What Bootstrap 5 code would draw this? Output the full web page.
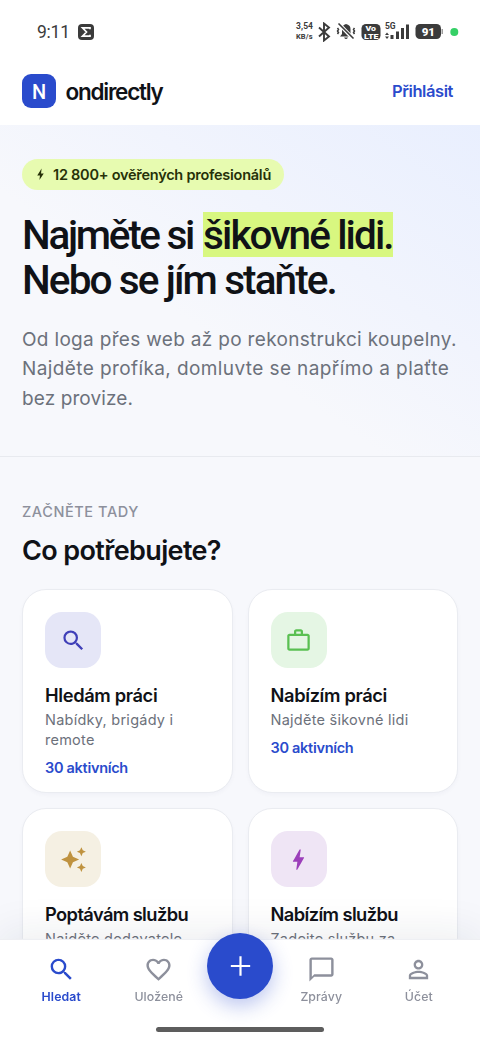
<!DOCTYPE html>
<html lang="cs">
<head>
<meta charset="utf-8">
<meta name="viewport" content="width=device-width, initial-scale=1">
<title>ondirectly</title>
<link href="https://cdn.jsdelivr.net/npm/bootstrap@5.3.0/dist/css/bootstrap.min.css" rel="stylesheet">
<style>
:root{--blue:#2a4bcc;--ink:#101217;--muted-ink:#6c717b}
html,body{height:100%;overflow:hidden}
body{font-family:Inter,"Liberation Sans",sans-serif;background:#f7f8fc;color:var(--ink);white-space:nowrap}
svg{display:block;flex:none}
.screen{width:480px;height:1040px;overflow:hidden}
.status{height:57px;padding:7px 21px 0 37px;font-family:Roboto,sans-serif;color:#3b3b3b}
.clock{font-size:17.500px;letter-spacing:-.25px}
.topbar{height:68px;padding:0 27px 0 22px}
.logo-tile{width:34px;height:34px;border-radius:9px;background:var(--blue);font:500 20px/1 Roboto,sans-serif;padding-top:2px}
.brand-name{font-size:22.500px;font-weight:600;line-height:1;letter-spacing:-1.250px;margin:2px 0 0 9.500px}
.login{font-size:16.500px;font-weight:600;color:var(--blue);letter-spacing:-.42px}
.hero{height:332px;padding:34px 22px 0;border-bottom:1px solid #e8eaef;background:linear-gradient(to bottom left,#e9effe 0%,#f1f4fd 35%,#f7f8fc 60%)}
.pill{height:31px;width:262px;border-radius:16px;background:#e7fbb0;color:#263108;font-size:14.500px;font-weight:600;padding-left:12px;letter-spacing:-.25px;gap:6px}
.headline{font:500 40.500px/45px Roboto,sans-serif;margin:23px 0 0;letter-spacing:-1.900px}
.headline .lead-in{letter-spacing:-2.310px}
.hl{background:#d8f780;display:inline-block;height:44px;box-shadow:0 -1px 0 #d8f780}
.word-gap{display:inline-block;width:10px}
.lede{font-size:19px;line-height:29.300px;color:var(--muted-ink);margin-top:22px;letter-spacing:.32px}
.lede .wide{letter-spacing:.4px}
.lede .snug{letter-spacing:.1px}
.kicker{font-size:14.500px;line-height:20px;font-weight:500;color:#8d909c;letter-spacing:.58px}
.section-title{font-size:27px;line-height:34px;font-weight:600;margin:12px 0 0;letter-spacing:-.63px}
.tiles{display:grid;grid-template-columns:210.500px 210.500px;gap:15px;grid-auto-rows:204.300px;margin-top:21px}
.tile{border:1px solid #eaecf1;border-radius:24px;background:#fff;padding:22px;box-shadow:0 2px 4px rgba(30,40,80,.03)}
.tile-icon{width:56px;height:56px;border-radius:17px;margin-bottom:15px}
.tile-title{font-size:18.300px;line-height:24px;font-weight:600;letter-spacing:-.36px}
.tile-title.tight{letter-spacing:-.6px}
.tile-text{font-size:14.500px;line-height:20px;color:var(--muted-ink);margin-top:3px;letter-spacing:.25px}
.tile-count{font-size:14.500px;line-height:20px;font-weight:600;color:var(--blue);margin-top:8px;letter-spacing:-.29px}
.dock{height:100px;background:#fff;padding:0 12.500px;box-shadow:0 -1px 1px #eeeff3,0 -8px 40px rgba(25,35,70,.08)}
.dock-item{width:97.500px;padding-top:14.500px;gap:5px;font-size:12.300px;font-weight:500;color:#8d909c;line-height:16px;letter-spacing:.1px}
.dock-item.on{color:var(--blue);font-weight:600}
.fab{width:66px;height:66px;margin:-7px -.5px 0;background:var(--blue);box-shadow:0 7px 20px rgba(42,75,204,.32)}
.grab{width:168px;height:5px;bottom:8px;background:#5d5d5d}
</style>
</head>
<body>
<div class="screen position-relative d-flex flex-column">
<div class="bg-white">
 <div class="status d-flex align-items-center">
  <span class="clock">9:11</span>
  <svg class="ms-2" width="16" height="16" viewBox="0 0 16 16"><rect width="16" height="16" rx="4" fill="#3b3b3b"/><path d="M12 5.200V3.800H4.500L8.500 8l-4 4.200H12v-1.400" fill="none" stroke="#fff" stroke-width="1.700"/></svg>
  <svg class="ms-auto" width="164" height="20" viewBox="296 22 164 20" font-family="Roboto,sans-serif" font-weight="700" fill="#3b3b3b">
   <text x="297" y="29" font-size="8.500" textLength="17">3,54</text><text x="297" y="39" font-size="7.500" textLength="16.500">KB/s</text>
   <path d="M320 27.500l10 9-5 4V23.500l5 4-10 9" fill="none" stroke="#3b3b3b" stroke-width="1.900"/>
   <path d="M341 36.500l2-2.500v-5c0-3 1.500-4 4-5 3 1 4.500 2 4.500 5v5l2 2.500zM345 37.500h4q-2 3-4 0z"/>
   <path d="M340 24l14.500 15" stroke="#fff" stroke-width="3.800"/><path d="M339.500 23.500l15 15" stroke="#3b3b3b" stroke-width="1.600"/>
   <path d="M338.500 28l1 1.500-1 1.500 1 1.500-1 1.500M355.500 28l-1 1.500 1 1.500-1 1.500 1 1.500" fill="none" stroke="#3b3b3b" stroke-width="1.500"/>
   <rect x="362.500" y="24" width="19" height="16" rx="4.500"/>
   <text x="366.500" y="31" font-size="7.500" font-weight="900" fill="#fff" textLength="10.500" lengthAdjust="spacingAndGlyphs">Vo</text><text x="365" y="38.700" font-size="7.500" font-weight="900" fill="#fff" textLength="14.500" lengthAdjust="spacingAndGlyphs">LTE</text>
   <text x="386" y="29" font-size="8.500" font-weight="700" textLength="10.500">5G</text>
   <path d="M386 35l2-2.500 2 2.500zM386 36.500h4l-2 2.500z"/><path d="M391.500 35h3v4h-3zM397 31.500h3V39h-3zM402 28h3v11h-3zM407 24.500h3V39h-3z"/>
   <rect x="416.500" y="24" width="25.500" height="15" rx="4.500"/><path d="M442.500 29h1.500v5h-1.500z" opacity=".5"/>
   <text x="422.700" y="35.700" font-size="11.500" font-weight="900" fill="#fff">91</text>
   <circle cx="455.300" cy="32" r="4" fill="#35d066"/>
  </svg>
 </div>
 <header class="topbar d-flex align-items-center">
  <span class="logo-tile d-flex align-items-center justify-content-center text-white">N</span>
  <span class="brand-name">ondirectly</span>
  <a class="login ms-auto text-decoration-none" href="#">Přihlásit</a>
 </header>
</div>
<section class="hero">
 <div class="pill d-flex align-items-center"><svg width="13" height="13" viewBox="0 0 24 24" fill="currentColor"><path d="M10 22l1-8H6l8-13-1 9h5z"/></svg><span>12 800+ ověřených profesionálů</span></div>
 <h1 class="headline"><span class="lead-in">Najměte si</span><span class="word-gap"></span><span class="hl">šikovné lidi.</span><br>Nebo se jím staňte.</h1>
 <p class="lede mb-0">Od loga přes web až po rekonstrukci koupelny.<br><span class="wide">Najděte profíka, domluvte se napřímo a plaťte</span><br><span class="snug">bez provize.</span></p>
</section>
<main style="padding:45px 22px 0">
 <div class="kicker">ZAČNĚTE TADY</div>
 <h2 class="section-title">Co potřebujete?</h2>
 <div class="tiles">
  <div class="tile"><div class="tile-icon d-flex align-items-center justify-content-center" style="background:#e5e6f7;color:#3f3fb8"><svg width="27" height="27" viewBox="0 0 24 24" fill="currentColor"><path d="M15.500 14h-.79l-.28-.27A6.471 6.471 0 0 0 16 9.500 6.500 6.500 0 1 0 9.500 16c1.610 0 3.090-.59 4.230-1.570l.27.28v.79l5 4.990L20.490 19l-4.990-5zm-6 0C7.010 14 5 11.990 5 9.500S7.010 5 9.500 5 14 7.010 14 9.500 11.990 14 9.500 14z"/></svg></div>
   <div class="tile-title">Hledám práci</div><div class="tile-text">Nabídky, brigády i<br>remote</div><div class="tile-count">30 aktivních</div></div>
  <div class="tile"><div class="tile-icon d-flex align-items-center justify-content-center" style="background:#e5f6e4;color:#5ac052"><svg width="27" height="27" viewBox="0 0 24 24" fill="currentColor"><path d="M14 6V4h-4v2h4zM4 8v11h16V8H4zm16-2c1.110 0 2 .89 2 2v11c0 1.110-.89 2-2 2H4c-1.110 0-2-.89-2-2l.01-11c0-1.110.88-2 1.990-2h4V4c0-1.110.89-2 2-2h4c1.110 0 2 .89 2 2v2h4z"/></svg></div>
   <div class="tile-title">Nabízím práci</div><div class="tile-text">Najděte šikovné lidi</div><div class="tile-count">30 aktivních</div></div>
  <div class="tile"><div class="tile-icon d-flex align-items-center justify-content-center" style="background:#f5f0e3;color:#bf923f"><svg width="27" height="27" viewBox="0 0 24 24" fill="currentColor"><path d="M19 9l1.250-2.750L23 5l-2.750-1.250L19 1l-1.250 2.750L15 5l2.750 1.250L19 9zm-7.500.5L9 4 6.500 9.500 1 12l5.500 2.500L9 20l2.500-5.500L17 12l-5.500-2.500zM19 15l-1.250 2.750L15 19l2.750 1.250L19 23l1.250-2.750L23 19l-2.750-1.250L19 15z"/></svg></div>
   <div class="tile-title tight">Poptávám službu</div><div class="tile-text">Najděte dodavatele</div></div>
  <div class="tile"><div class="tile-icon d-flex align-items-center justify-content-center" style="background:#efe5f5;color:#9c3fba"><svg width="27" height="27" viewBox="0 0 24 24" fill="currentColor"><path d="M11 21h-1l1-7H7.500c-.58 0-.57-.32-.38-.66C8.480 10.940 10.420 7.540 13 3h1l-1 7h3.500c.49 0 .56.33.47.51C12.960 17.550 11 21 11 21z"/></svg></div>
   <div class="tile-title tight">Nabízím službu</div><div class="tile-text">Zadejte službu za</div></div>
 </div>
</main>
<nav class="dock fixed-bottom d-flex align-items-start">
 <div class="dock-item on d-flex flex-column align-items-center"><svg width="29" height="29" viewBox="0 0 24 24" fill="currentColor"><path d="M15.500 14h-.79l-.28-.27A6.471 6.471 0 0 0 16 9.500 6.500 6.500 0 1 0 9.500 16c1.610 0 3.090-.59 4.230-1.570l.27.28v.79l5 4.990L20.490 19l-4.990-5zm-6 0C7.010 14 5 11.990 5 9.500S7.010 5 9.500 5 14 7.010 14 9.500 11.990 14 9.500 14z"/></svg><span>Hledat</span></div>
 <div class="dock-item d-flex flex-column align-items-center"><svg width="29" height="29" viewBox="0 0 24 24" fill="currentColor"><path d="M16.500 3c-1.740 0-3.410.81-4.500 2.090C10.910 3.810 9.240 3 7.500 3 4.420 3 2 5.420 2 8.500c0 3.780 3.400 6.860 8.550 11.540L12 21.350l1.450-1.320C18.600 15.360 22 12.280 22 8.500 22 5.420 19.580 3 16.500 3zm-4.400 15.550l-.1.1-.1-.1C7.140 14.240 4 11.390 4 8.500 4 6.500 5.500 5 7.500 5c1.540 0 3.040.99 3.570 2.360h1.870C13.460 5.990 14.960 5 16.500 5c2 0 3.500 1.500 3.500 3.500 0 2.890-3.140 5.740-7.900 10.050z"/></svg><span>Uložené</span></div>
 <div class="fab rounded-circle d-flex align-items-center justify-content-center flex-shrink-0"><svg width="29" height="29" viewBox="0 0 24 24" fill="#fff"><path d="M20 12.500h-7.100v7.100h-1.800v-7.100H4v-1.800h7.100V3.600h1.800v7.100H20z"/></svg></div>
 <div class="dock-item d-flex flex-column align-items-center"><svg width="29" height="29" viewBox="0 0 24 24" fill="currentColor"><path d="M20 2H4c-1.100 0-2 .9-2 2v18l4-4h14c1.100 0 2-.9 2-2V4c0-1.100-.9-2-2-2zm0 14H6l-2 2V4h16v12z"/></svg><span>Zprávy</span></div>
 <div class="dock-item d-flex flex-column align-items-center"><svg width="29" height="29" viewBox="0 0 24 24" fill="currentColor"><path d="M12 5.900c1.160 0 2.100.94 2.100 2.100s-.94 2.100-2.100 2.100S9.900 9.160 9.900 8s.94-2.100 2.100-2.100m0 9c2.970 0 6.100 1.460 6.100 2.100v1.100H5.900V17c0-.64 3.130-2.100 6.100-2.100M12 4C9.790 4 8 5.790 8 8s1.790 4 4 4 4-1.790 4-4-1.790-4-4-4zm0 9c-2.670 0-8 1.340-8 4v3h16v-3c0-2.660-5.330-4-8-4z"/></svg><span>Účet</span></div>
 <div class="grab position-absolute start-50 translate-middle-x rounded-pill"></div>
</nav>
</div>
<script src="https://cdn.jsdelivr.net/npm/bootstrap@5.3.0/dist/js/bootstrap.bundle.min.js"></script>
</body>
</html>
